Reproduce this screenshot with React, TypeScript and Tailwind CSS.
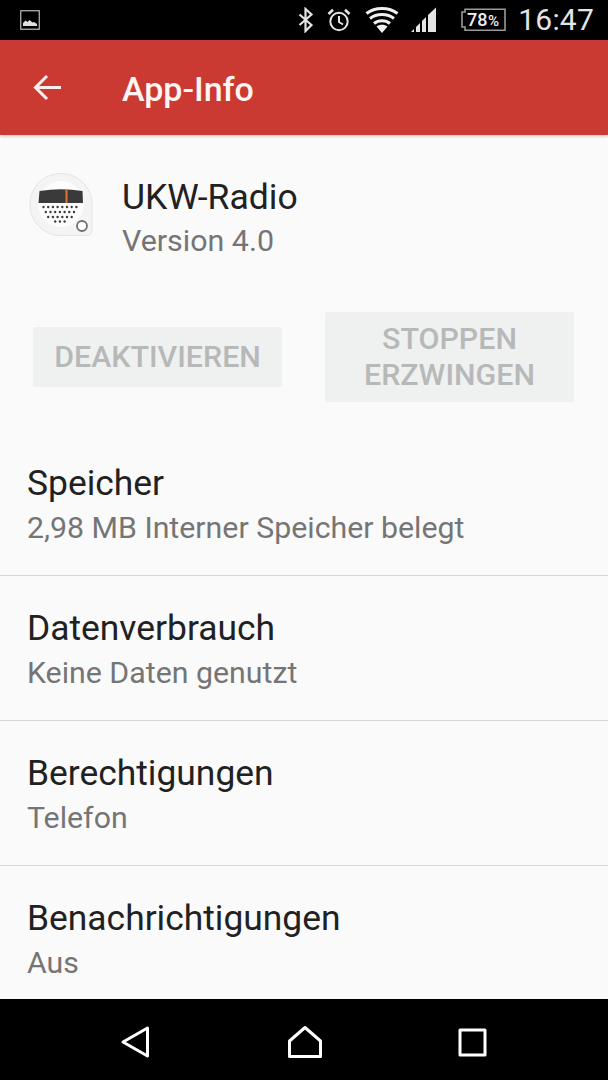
export default function App() {
  const rows = [
    ["Speicher", "2,98 MB Interner Speicher belegt"],
    ["Datenverbrauch", "Keine Daten genutzt"],
    ["Berechtigungen", "Telefon"],
    ["Benachrichtigungen", "Aus"],
  ];
  const dots: [number, number, number][] = [
    [35, 15.500, 8],
    [40, 17.800, 7],
    [45, 20.200, 6],
    [49.500, 27.200, 3],
  ];
  return (
    <div className="w-[608px] h-[1080px] flex flex-col bg-[#fafafa] overflow-hidden font-['Roboto',sans-serif]">
      <div className="h-[40px] shrink-0 bg-black flex items-center pl-[20px] pr-[14px] text-[#e4e4e4]">
        <svg width="20" height="20" viewBox="0 0 20 20" fill="none">
          <rect x="0.75" y="0.75" width="18.500" height="18.500" stroke="#bdbdbd" strokeWidth="1.200" />
          <path d="M3 16v-3l2.500-2.500 2 1.500 2-2 3 2.500 1.500-.5 3 2V16z" fill="#e0e0e0" />
        </svg>
        <div className="flex-1" />
        <svg width="18" height="26" viewBox="0 0 18 26" fill="none" stroke="#e4e4e4" strokeWidth="2.200" className="mr-[11px]">
          <path d="M2.500 7.500 14.500 18 8.500 24V2l6 5.500L2.500 18" />
        </svg>
        <svg width="26" height="26" viewBox="0 0 26 26" fill="none" stroke="#e4e4e4" strokeWidth="2" className="mr-[13px]">
          <circle cx="13" cy="14.500" r="8.700" />
          <path d="M13 9v6l4 2.500" />
          <path d="M2.500 7 7 2.800M23.500 7 19 2.800" strokeWidth="2.600" />
        </svg>
        <svg width="34" height="28" viewBox="0 0 34 28" className="mr-[12px]">
          <path d="M17 27 11.500 20.500C14.500 18 19.500 18 22.500 20.500z" fill="#f0f0f0" />
          <path d="M9 17.500C13.500 13.800 20.500 13.800 25 17.500" fill="none" stroke="#f0f0f0" strokeWidth="3" />
          <path d="M5 12.500C11.500 7.300 22.500 7.300 29 12.500" fill="none" stroke="#f0f0f0" strokeWidth="3" />
          <path d="M1.500 7.500C10 .8 24 .8 32.500 7.500" fill="none" stroke="#f0f0f0" strokeWidth="3" />
        </svg>
        <svg width="26" height="26" viewBox="0 0 26 26" className="mr-[23px]">
          <path d="M0 25 3 22v3zM5 25v-5l4-4v9zM11 25V14l4-4v15zM17 25V8l8-7.500V25z" fill="#e4e4e4" />
        </svg>
        <svg width="46" height="24" viewBox="0 0 46 24" className="mr-[12px] shrink-0">
          <path d="M5 4V1.200h40v21H5V19H2V4z" fill="none" stroke="#9a9a9a" strokeWidth="1.600" />
          <text x="7" y="18" fill="#f0f0f0" fontSize="18" fontWeight="500" fontFamily="Roboto">78</text>
          <text x="28" y="17.500" fill="#f0f0f0" fontSize="15" fontWeight="500" fontFamily="Roboto">%</text>
        </svg>
        <span className="text-[30px] leading-none tracking-[0.2px]">16:47</span>
      </div>

      <div className="h-[95px] shrink-0 bg-[#cb3a32] flex items-center pl-[33px] shadow-[0_1px_3px_rgba(0,0,0,0.25)] z-10">
        <svg width="29" height="27" viewBox="0 0 29 27" fill="none" stroke="#fdeeee" strokeWidth="3" className="mr-[60px]">
          <path d="M28 13.500H3M14 2 2.500 13.500 14 25" />
        </svg>
        <span className="text-[34px] font-medium leading-none text-[#fff5f4] pt-[2px]">App-Info</span>
      </div>

      <div className="flex-1 min-h-0 flex flex-col overflow-hidden">
        <div className="flex items-start pl-[28px] pt-[36px]">
          <svg width="67" height="67" viewBox="0 0 67 67" className="shrink-0 mr-[27px] mt-[1px]">
            <path d="M33 1.500C15.800 1.500 2 15.300 2 32.500S15.800 63.500 33 63.500h26c3 0 5-2 5-5V32.500C64 15.300 50.200 1.500 33 1.500z" fill="#f4f4f4" stroke="#e4e4e4" />
            <circle cx="33" cy="32" r="23" fill="#fcfcfc" />
            <path d="M11.500 19Q33 15.500 54.500 19L55 31H10.500z" fill="#3a3a3a" />
            <rect x="37.500" y="17" width="2" height="14" fill="#e4753a" />
            {dots.map(([y, x0, n]) =>
              Array.from({ length: n }, (_, i) => (
                <circle key={y + "-" + i} cx={x0 + i * 4.700} cy={y} r="1.200" fill="#3c3c3c" />
              ))
            )}
            <circle cx="54" cy="54" r="5" fill="#fff" stroke="#707070" strokeWidth="1.800" />
          </svg>
          <div className="pt-[5px]">
            <div className="text-[35.500px] leading-[42px] text-[#212121]">UKW-Radio</div>
            <div className="text-[30.400px] leading-[46px] text-[#757575]">Version 4.0</div>
          </div>
        </div>

        <div className="flex items-center pl-[33px] mt-[48px] gap-[43px]">
          <div className="w-[249px] h-[60px] rounded-[2px] bg-[#eff0f0] flex items-center justify-center text-[30.400px] font-medium text-[#b7b9b9]">
            DEAKTIVIEREN
          </div>
          <div className="w-[249px] h-[90px] rounded-[2px] bg-[#eff0f0] flex items-center justify-center text-center text-[30.400px] leading-[36px] font-medium text-[#b7b9b9]">
            STOPPEN
            <br />
            ERZWINGEN
          </div>
        </div>

        <div className="mt-[29px] flex flex-col">
          {rows.map(([t, s], i) => (
            <div key={t} className={"h-[145px] shrink-0 pl-[27px] pt-[30px] " + (i < 3 ? "border-b border-[#d6d6d6]" : "")}>
              <div className="text-[35.400px] leading-[44px] text-[#212121]">{t}</div>
              <div className="text-[30.300px] leading-[46px] text-[#757575]">{s}</div>
            </div>
          ))}
        </div>
      </div>

      <div className="h-[81px] shrink-0 bg-black flex items-start pt-[26px] relative">
        <svg width="30" height="34" viewBox="0 0 30 34" fill="none" stroke="#fff" strokeWidth="3" strokeLinejoin="round" className="ml-[120px]">
          <path d="M27.500 3 3 17l24.500 14z" />
        </svg>
        <svg width="36" height="34" viewBox="0 0 36 34" fill="none" stroke="#fff" strokeWidth="3" strokeLinejoin="round" className="ml-[137px]">
          <path d="M18 2.500 33.500 16v15.500h-31V16z" />
        </svg>
        <svg width="30" height="30" viewBox="0 0 30 30" fill="none" stroke="#fff" strokeWidth="3" strokeLinejoin="round" className="ml-[135px] mt-[3px]">
          <rect x="2" y="2" width="25" height="25" />
        </svg>
      </div>
    </div>
  );
}
